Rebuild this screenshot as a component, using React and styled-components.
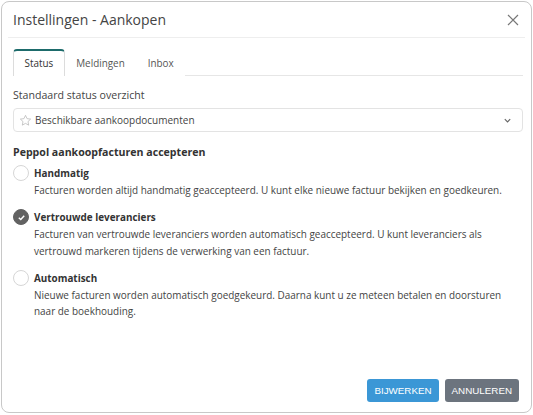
import React, { useState } from 'react'
import styled, { createGlobalStyle } from 'styled-components'

const Global = createGlobalStyle`
  html, body { margin: 0; padding: 0; background: #fff; }
  body { font-family: "Open Sans", "Liberation Sans", sans-serif; color: #444; }
  * { box-sizing: border-box; }
`

const Dialog = styled.div`
  margin: 1px;
  width: 531px;
  height: 412px;
  border: 1px solid #c8c8c8;
  border-radius: 8px;
  background: #fff;
  display: flex;
  flex-direction: column;
`

const Header = styled.div`
  display: flex;
  align-items: center;
  justify-content: space-between;
  height: 36px;
  margin: 0 6px;
  padding: 0 5px 0 5px;
  border-bottom: 1px solid #eee;
`

const Title = styled.h1`
  margin: 0;
  font-size: 14px;
  font-weight: 400;
  color: #444;
`

const Close = styled.button`
  border: 0;
  background: none;
  padding: 0;
  width: 14px;
  height: 14px;
  display: flex;
  cursor: pointer;
`

const Body = styled.div`
  flex: 1;
  padding: 11px 8px 0 11px;
  display: flex;
  flex-direction: column;
`

const Tabs = styled.div`
  display: flex;
  border-bottom: 1px solid #e6e6e6;
  height: 27px;
`

const Tab = styled.div`
  padding: 0 10.5px;
  font-size: 9.9px;
  line-height: 24px;
  color: ${p => (p.$active ? '#333' : '#555')};
  border: 1px solid ${p => (p.$active ? '#dcdcdc' : 'transparent')};
  border-top: 2px solid ${p => (p.$active ? '#1d6b6b' : 'transparent')};
  border-bottom: 0;
  border-radius: 4px 4px 0 0;
  background: #fff;
  margin-bottom: -1px;
  cursor: pointer;
`

const FieldLabel = styled.div`
  margin-top: 11px;
  font-size: 10.6px;
  line-height: 16px;
  color: #444;
`

const Select = styled.div`
  margin-top: 5px;
  height: 24px;
  border: 1px solid #e3e3e3;
  border-radius: 4px;
  display: flex;
  align-items: center;
  padding: 0 10px 0 5px;
  gap: 3px;
  font-size: 10px;
  color: #444;
`

const SelectText = styled.span`
  flex: 1;
`

const SectionTitle = styled.h2`
  margin: 12px 0 0;
  font-size: 10.6px;
  line-height: 16px;
  font-weight: 700;
  color: #333;
`

const Options = styled.div`
  display: flex;
  flex-direction: column;
  gap: 10px;
  margin-top: 4px;
`

const Option = styled.label`
  display: grid;
  grid-template-columns: 21px 1fr;
  cursor: pointer;
`

const Radio = styled.span`
  width: 16px;
  height: 16px;
  border-radius: 50%;
  margin-top: 1px;
  border: 1px solid ${p => (p.$checked ? '#626262' : '#d6d6d6')};
  background: ${p => (p.$checked ? '#626262' : '#fff')};
  display: flex;
  align-items: center;
  justify-content: center;
`

const OptionTitle = styled.div`
  font-size: 9.9px;
  font-weight: 700;
  color: #333;
  line-height: 18px;
`

const OptionText = styled.div`
  font-size: 9.95px;
  color: #444;
  line-height: 16.3px;
`

const Footer = styled.div`
  display: flex;
  justify-content: flex-end;
  gap: 6px;
  padding: 0 12px 10px;
`

const Button = styled.button`
  height: 23px;
  padding: 0 7px;
  border: 0;
  border-radius: 3px;
  font-family: "Liberation Sans", Arial, sans-serif;
  font-size: 9.8px;
  color: #fff;
  background: ${p => (p.$variant === 'primary' ? '#3b97d6' : '#6c747e')};
  cursor: pointer;
`

const options = [
  {
    title: 'Handmatig',
    text: 'Facturen worden altijd handmatig geaccepteerd. U kunt elke nieuwe factuur bekijken en goedkeuren.',
  },
  {
    title: 'Vertrouwde leveranciers',
    text: 'Facturen van vertrouwde leveranciers worden automatisch geaccepteerd. U kunt leveranciers als vertrouwd markeren tijdens de verwerking van een factuur.',
  },
  {
    title: 'Automatisch',
    text: 'Nieuwe facturen worden automatisch goedgekeurd. Daarna kunt u ze meteen betalen en doorsturen naar de boekhouding.',
  },
]

const App = () => {
  const [tab, setTab] = useState('Status')
  const [choice, setChoice] = useState(1)

  return (
    <>
      <Global />
      <Dialog>
        <Header>
          <Title>Instellingen - Aankopen</Title>
          <Close aria-label="Sluiten">
            <svg width="14" height="14" viewBox="0 0 14 14">
              <path d="M2 2 L12 12 M12 2 L2 12" stroke="#777" strokeWidth="1.2" />
            </svg>
          </Close>
        </Header>
        <Body>
          <Tabs>
            {['Status', 'Meldingen', 'Inbox'].map(t => (
              <Tab key={t} $active={tab === t} onClick={() => setTab(t)}>
                {t}
              </Tab>
            ))}
          </Tabs>
          <FieldLabel>Standaard status overzicht</FieldLabel>
          <Select>
            <svg width="13" height="13" viewBox="0 0 24 24">
              <path
                d="M12 2.5l2.9 6.1 6.6.8-4.9 4.6 1.3 6.6L12 17.3l-5.9 3.3 1.3-6.6-4.9-4.6 6.6-.8z"
                fill="none"
                stroke="#b8b8b8"
                strokeWidth="1.4"
                strokeLinejoin="round"
              />
            </svg>
            <SelectText>Beschikbare aankoopdocumenten</SelectText>
            <svg width="9" height="9" viewBox="0 0 10 10">
              <path d="M2 3.5 L5 6.5 L8 3.5" fill="none" stroke="#666" strokeWidth="1.3" />
            </svg>
          </Select>
          <SectionTitle>Peppol aankoopfacturen accepteren</SectionTitle>
          <Options>
            {options.map((o, i) => (
              <Option key={o.title} onClick={() => setChoice(i)}>
                <Radio $checked={choice === i}>
                  {choice === i && (
                    <svg width="9" height="9" viewBox="0 0 10 10">
                      <path d="M2 5.2 L4.2 7.3 L8 3" fill="none" stroke="#fff" strokeWidth="1.6" />
                    </svg>
                  )}
                </Radio>
                <div>
                  <OptionTitle>{o.title}</OptionTitle>
                  <OptionText>{o.text}</OptionText>
                </div>
              </Option>
            ))}
          </Options>
        </Body>
        <Footer>
          <Button $variant="primary">BIJWERKEN</Button>
          <Button>ANNULEREN</Button>
        </Footer>
      </Dialog>
    </>
  )
}

export default App
